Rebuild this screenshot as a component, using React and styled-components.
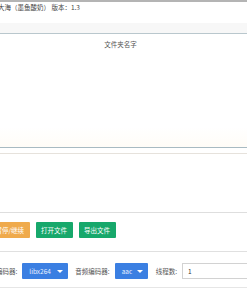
import React from "react";
import styled, { createGlobalStyle } from "styled-components";

const Global = createGlobalStyle`
  html, body { margin: 0; padding: 0; background: #fff; overflow: hidden; }
  body { font-family: "Noto Sans CJK SC", "Noto Sans", sans-serif; font-size: 6.5px; color: #444; }
`;

const Page = styled.div`
  width: 247px;
  height: 296px;
  overflow: hidden;
  border-top: 2px solid #b4b4b4;
  box-sizing: border-box;
`;

const Header = styled.div`
  height: 21px;
  padding-top: 1px;
  box-sizing: border-box;
  color: #444;
  white-space: nowrap;
  line-height: 9px;
`;

const Clip = styled.span`
  display: inline-block;
  margin-left: ${(p) => p.$shift || 0}px;
`;

const SubBar = styled.div`
  height: 10px;
  background: #f7f7f7;
  border-bottom: 1px solid #b9c7cd;
`;

const Folder = styled.div`
  height: 113px;
  display: flex;
  flex-direction: column;
  align-items: center;
  background: linear-gradient(to bottom, #fff 0%, #fff 82%, #fffcf7 100%);
  border-bottom: 1px solid #a8bac2;
`;

const FolderTitle = styled.div`
  margin-top: 5px;
  color: #555;
  transform: translateX(-3px);
`;

const Thin = styled.div`
  height: 5px;
  border-bottom: 1px solid #e6e2dc;
`;

const Spacer = styled.div`
  height: ${(p) => p.$h}px;
  border-bottom: ${(p) => (p.$line ? `1px solid ${p.$line}` : "none")};
`;

const Row = styled.div`
  display: flex;
  align-items: center;
  gap: ${(p) => p.$gap || 6}px;
  height: 16px;
  white-space: nowrap;
`;

const Button = styled.div`
  height: 16px;
  padding: 0 5.5px;
  display: flex;
  align-items: center;
  color: #fff;
  background: ${(p) => p.$bg};
  border-radius: 1px;
  margin-left: ${(p) => p.$shift || 0}px;
`;

const Label = styled.span`
  color: #555;
  margin-left: ${(p) => p.$shift || 0}px;
`;

const Select = styled.div`
  width: ${(p) => p.$w}px;
  height: 16px;
  box-sizing: border-box;
  background: #3b7fe2;
  color: #e8f0ff;
  display: flex;
  align-items: center;
  justify-content: space-between;
  padding: 0 5px 0 7px;
  border-radius: 1px;
`;

const Caret = styled.span`
  width: 0;
  height: 0;
  border-left: 3px solid transparent;
  border-right: 3px solid transparent;
  border-top: 3px solid #fff;
`;

const Input = styled.div`
  flex: 1;
  height: 16px;
  box-sizing: border-box;
  border: 1px solid #d2d2d2;
  border-right: none;
  display: flex;
  align-items: center;
  padding-left: 5px;
  color: #333;
`;

export default function App() {
  return (
    <>
      <Global />
      <Page>
        <Header>
          <Clip $shift={-2}>大海（墨鱼酸奶） 版本：1.3</Clip>
        </Header>
        <SubBar />
        <Folder>
          <FolderTitle>文件夹名字</FolderTitle>
        </Folder>
        <Thin />
        <Spacer $h={58} $line="#dedede" />
        <Spacer $h={9} />
        <Row $gap={6}>
          <Button $bg="#efaa4c" $shift={-10}>暂停/继续</Button>
          <Button $bg="#17a86b">打开文件</Button>
          <Button $bg="#17a86b">导出文件</Button>
        </Row>
        <Spacer $h={13} $line="#e0e0e0" />
        <Spacer $h={11} />
        <Row $gap={5}>
          <Label $shift={-17}>视频编码器:</Label>
          <Select $w={46}>
            <span>libx264</span>
            <Caret />
          </Select>
          <Label style={{ marginLeft: 2 }}>音频编码器:</Label>
          <Select $w={33}>
            <span>aac</span>
            <Caret />
          </Select>
          <Label style={{ marginLeft: 3 }}>线程数:</Label>
          <Input>1</Input>
        </Row>
        <Spacer $h={8} $line="#e6e6e6" />
      </Page>
    </>
  );
}
